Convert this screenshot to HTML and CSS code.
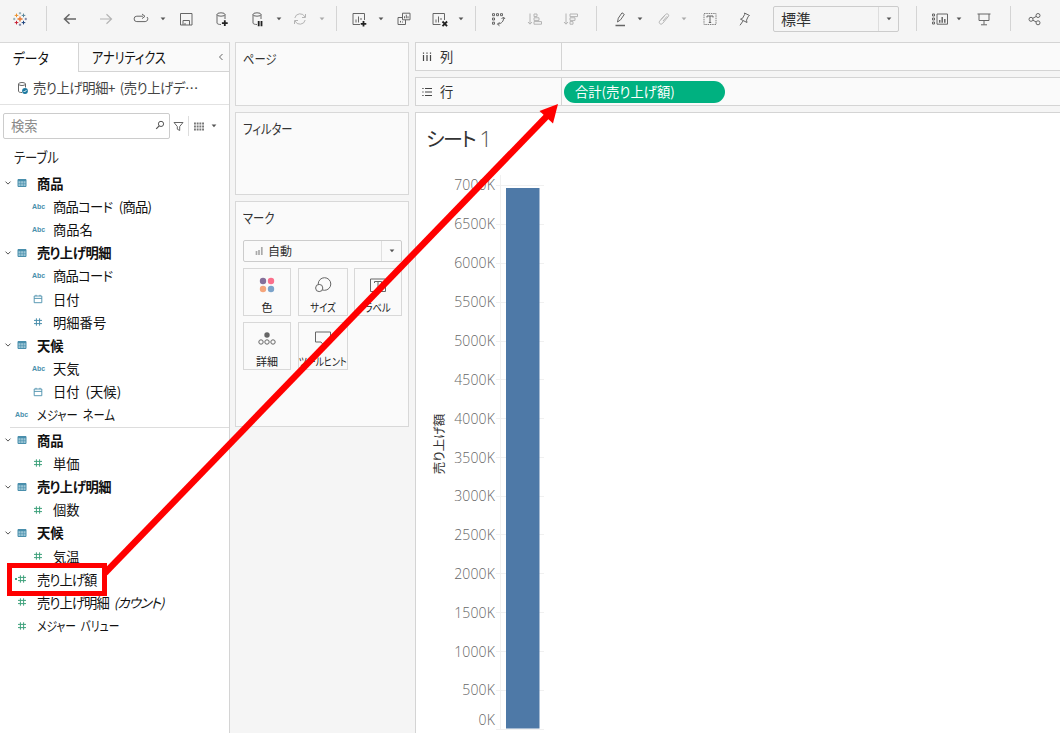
FILE: index.html
```
<!DOCTYPE html>
<html lang="ja">
<head>
  <meta charset="UTF-8" />
  <title>シート 1</title>
  <link rel="stylesheet" href="styles.css">
</head>
<body>
  <svg width="0" height="0" class="defs">
    <symbol id="caret" viewBox="0 0 6 4"><path d="M.6 .5h4.8L3 3.3z" fill="currentColor" stroke="none"/></symbol>
    <symbol id="table" viewBox="0 0 10 10"><path d="M1 1.5h8v7H1z" fill="#9cc6d6" stroke="#4a8fac"/><path d="M1 2.4h8" stroke="#4a8fac" stroke-width="1.6"/><path d="M3.7 3v5.5M6.4 3v5.5M1 5.7h8" stroke="#4a8fac" stroke-width=".6"/></symbol>
    <symbol id="hash" viewBox="0 0 10 10"><path d="M3.4 1.3v7.4M6.6 1.3v7.4M1 3.4h8M1 6.6h8" stroke="currentColor" stroke-width="1"/></symbol>
    <symbol id="date" viewBox="0 0 10 10"><path d="M1.2 2h7.6v6.7H1.2zM1.2 4.4h7.6M3 .8v1.4M7 .8v1.4" stroke="currentColor" stroke-width=".9"/></symbol>
    <symbol id="open" viewBox="0 0 8 6"><path d="M1.5 1.6L4 4.1l2.5-2.5" stroke="#555"/></symbol>
  </svg>

  <div class="toolbar">
    <svg class="icon logo" viewBox="0 0 18 18">
      <path d="M9 6.5v5M6.5 9h5" stroke="#e8762c" stroke-width="1.3"/>
      <path d="M5.5 3.6v3.6M3.7 5.4h3.6" stroke="#eb912c"/><path d="M12.5 3.6v3.6M10.7 5.4h3.6" stroke="#59879b"/>
      <path d="M5.5 10.8v3.6M3.7 12.6h3.6" stroke="#c72035"/><path d="M12.5 10.8v3.6M10.7 12.6h3.6" stroke="#1f457e"/>
      <path d="M9 2v2.4M7.8 3.2h2.4M3.2 7.8v2.4M2 9h2.4" stroke="#7199a6" stroke-width=".8"/>
      <path d="M9 13.6V16M7.8 14.8h2.4M14.8 7.8v2.4M13.6 9H16" stroke="#5b6591" stroke-width=".8"/>
    </svg>
    <i class="sep wide"></i>
    <svg class="icon" viewBox="0 0 18 18"><path d="M15 9H3.500M8.500 4.200L3.500 9l5 4.800" stroke-width="1.5"/></svg>
    <svg class="icon off" viewBox="0 0 18 18"><path d="M3 9h11.500M9.500 4.200l5 4.800-5 4.800" stroke-width="1.2"/></svg>
    <svg class="icon redo" viewBox="0 0 18 18"><path d="M11 6.200H4.800a2.700 2.700 0 0 0 0 5.400h8.400a2.700 2.700 0 0 0 1.800-4.600"/><path d="M10 4l3 2.300-3 2.300"/></svg>
    <svg class="caret"><use href="#caret"/></svg>
    <svg class="icon" viewBox="0 0 18 18"><path d="M3.500 3.500h11.500v11.500H3.500zM6 15v-4.500h6.500V15M8 15v-2"/></svg>
    <svg class="icon" viewBox="0 0 18 18"><path d="M8 14.500c-2 0-4-.5-4-1.500V4.500M12 4.500V9"/><ellipse cx="8" cy="4.500" rx="4" ry="1.700"/><path d="M11.800 10.300v5.800M8.900 13.200h5.800" class="strong"/></svg>
    <svg class="icon" viewBox="0 0 18 18"><path d="M8 14.500c-2 0-4-.5-4-1.500V4.500M12 4.500V9"/><ellipse cx="8" cy="4.500" rx="4" ry="1.700"/><path d="M9.700 11v5.200M12.500 11v5.200" class="strong"/></svg>
    <svg class="caret pause-caret"><use href="#caret"/></svg>
    <svg class="icon off refresh" viewBox="0 0 18 18"><path d="M3.800 8A5.400 5.400 0 0 1 14 7M14.200 10A5.400 5.400 0 0 1 4 11"/><path d="M14.500 4v3.500H11M3.500 14v-3.500H7"/></svg>
    <svg class="caret off"><use href="#caret"/></svg>
    <i class="sep near"></i>
    <svg class="icon add" viewBox="0 0 18 18"><path d="M10 14.500H3v-11h11.500V10M6 12.500V9.500M8.500 12.500V6.500M11 10V8"/><path d="M13.500 11v5.600M10.700 13.800h5.600" class="strong"/></svg>
    <svg class="caret"><use href="#caret"/></svg>
    <svg class="icon" viewBox="0 0 18 18"><path d="M7.500 3.200H15v6.600H7.500zM7.500 7.500H3V14.500h7.500V9.800M9.500 8.300v-2M11.300 8.300v-3.600M13 8.300v-2M5.500 12.500v-1.600M7.500 12.500v-1"/></svg>
    <svg class="icon" viewBox="0 0 18 18"><path d="M9.500 14.500H2v-11h11.500V10M5 12.500V9.500M7.500 12.500V6.500M10 10V8"/><path d="M11.500 11.500l4.600 4.600M16.100 11.500l-4.600 4.600" class="strong"/></svg>
    <svg class="caret clear-caret"><use href="#caret"/></svg>
    <i class="sep near"></i>
    <svg class="icon" viewBox="0 0 18 18"><path d="M2.500 3.700h2v2h-2zM6.500 3.700h2v2h-2zM10.500 3.700h2v2h-2zM2.500 8h2v2h-2zM2.500 12.200h2v2h-2z"/><path d="M13.500 7.500c.5 3.500-2 6.300-6 6.700M11.500 9l2-2 1.500 2M9.500 12.200l-2 2 2 1.600"/></svg>
    <svg class="icon off" viewBox="0 0 18 18"><path d="M4 3.500v10.500M2 12l2 2.200L6 12M8 4h3v2.600H8zM8 7.800h5v2.600H8zM8 11.600h7.500v2.600H8z"/></svg>
    <svg class="icon off" viewBox="0 0 18 18"><path d="M4 3.500v10.500M2 12l2 2.200L6 12M8 4h7.500v2.600H8zM8 7.800h5v2.600H8zM8 11.600h3v2.600H8z"/></svg>
    <i class="sep"></i>
    <svg class="icon" viewBox="0 0 18 18"><path d="M6.500 12l.8-3.800 3.700-5.400 2.300 1.600-3.700 5.400z"/><path d="M4.500 15.500h9.500" stroke-width="1.500"/></svg>
    <svg class="caret close"><use href="#caret"/></svg>
    <svg class="icon off clip" viewBox="0 0 18 18"><path d="M6 9.500l4.500-5c1.500-1.600 4.300 0 2.700 2.200l-5.700 6.800c-1.600 1.600-4.300-.2-2.900-2.300L9.700 5.500M8 11l4-4.700"/></svg>
    <svg class="caret off close"><use href="#caret"/></svg>
    <svg class="icon label" viewBox="0 0 18 18"><path d="M3 3.500h12v11H3z" stroke-dasharray="1.500 .8" stroke-width=".8"/><path d="M6 7.500V6h6v1.500M9 6v6.500M7.800 12.500h2.400"/></svg>
    <svg class="icon pin" viewBox="0 0 18 18"><path d="M9.500 3l5 2.500-1.300 1-1.700 3.700.5 2.300-6.500-3.300 2-.9 2.200-3.900zM8 11l-3 4.300"/></svg>
    <div class="fit"><span>標準</span><b><svg class="caret"><use href="#caret"/></svg></b></div>
    <i class="sep wide"></i>
    <svg class="icon" viewBox="0 0 18 18"><path d="M1.500 4h2v2h-2zM1.500 8h2v2h-2zM1.500 12h2v2h-2zM6 4h10.500v10.200H6z"/><path d="M8.700 12.700V10M11.200 12.700V7M13.800 12.700V9" stroke-width="1.500"/></svg>
    <svg class="caret cards-caret"><use href="#caret"/></svg>
    <svg class="icon present" viewBox="0 0 18 18"><path d="M2.500 4h13M4 4v6.500h10V4M9 10.500v4M6 14.800h6"/></svg>
    <i class="sep wide"></i>
    <svg class="icon share" viewBox="0 0 18 18"><circle cx="5" cy="9.300" r="2"/><circle cx="12" cy="5.500" r="2"/><circle cx="12" cy="12.800" r="2"/><path d="M6.800 8.300l3.500-1.900M6.800 10.200l3.500 1.800"/></svg>
  </div>

  <div class="workspace">
    <div class="data-pane">
      <div class="tabs">
        <div class="tab active"><span class="kana">データ</span></div>
        <div class="tab"><span class="kana narrow">アナリティクス</span><svg class="collapse" viewBox="0 0 6 8"><path d="M4.500 1L1.500 4l3 3" stroke="#666"/></svg></div>
      </div>
      <div class="source">
        <svg viewBox="0 0 13 14"><path d="M6 11.500c-2 0-3.500-.4-3.500-1.300V3M9.500 3v3.500" stroke="#666"/><ellipse cx="6" cy="3" rx="3.500" ry="1.500" stroke="#666"/><circle cx="9" cy="10" r="2.900" fill="#1c79a0"/><path d="M7.600 10l1 1 1.900-2" stroke="#fff" stroke-width=".9"/></svg>
        <span>売り上げ明細+ (売り上げデ⋯</span>
      </div>
      <div class="search-row">
        <div class="search">検索<svg viewBox="0 0 10 10"><circle cx="6" cy="3.900" r="2.600" stroke="#555"/><path d="M4.200 5.900L1.200 8.900" stroke="#555" stroke-width="1.200"/></svg></div>
        <svg class="funnel" viewBox="0 0 11 11"><path d="M1 1.500h9L6.700 5.500v4L4.300 8.200V5.500z" stroke="#666"/></svg>
        <i class="rule"></i>
        <svg class="grid-view" viewBox="0 0 10 9"><path d="M0 1.500h10M0 4.500h10M0 7.500h10" stroke="#777" stroke-width="1.800" stroke-dasharray="1.900 .8"/></svg>
        <svg class="caret"><use href="#caret"/></svg>
      </div>
      <div class="heading"><span class="kana">テーブル</span></div>

      <div class="tree">
        <div class="row folder"><svg class="open"><use href="#open"/></svg><svg class="type"><use href="#table"/></svg><span>商品</span></div>
        <div class="row child"><em>Abc</em><span class="mixed code">商品コード (商品)</span></div>
        <div class="row child"><em>Abc</em><span>商品名</span></div>
        <div class="row folder"><svg class="open"><use href="#open"/></svg><svg class="type"><use href="#table"/></svg><span class="mixed">売り上げ明細</span></div>
        <div class="row child"><em>Abc</em><span class="mixed code">商品コード</span></div>
        <div class="row child"><svg class="type"><use href="#date"/></svg><span>日付</span></div>
        <div class="row child"><svg class="type"><use href="#hash"/></svg><span>明細番号</span></div>
        <div class="row folder"><svg class="open"><use href="#open"/></svg><svg class="type"><use href="#table"/></svg><span>天候</span></div>
        <div class="row child"><em>Abc</em><span>天気</span></div>
        <div class="row child"><svg class="type"><use href="#date"/></svg><span>日付 (天候)</span></div>
        <div class="row"><em>Abc</em><span class="kana">メジャー ネーム</span></div>
      </div>
      <div class="tree measures">
        <div class="row folder"><svg class="open"><use href="#open"/></svg><svg class="type"><use href="#table"/></svg><span>商品</span></div>
        <div class="row child"><svg class="type"><use href="#hash"/></svg><span>単価</span></div>
        <div class="row folder"><svg class="open"><use href="#open"/></svg><svg class="type"><use href="#table"/></svg><span class="mixed">売り上げ明細</span></div>
        <div class="row child"><svg class="type"><use href="#hash"/></svg><span>個数</span></div>
        <div class="row folder"><svg class="open"><use href="#open"/></svg><svg class="type"><use href="#table"/></svg><span>天候</span></div>
        <div class="row child"><svg class="type"><use href="#hash"/></svg><span>気温</span></div>
        <div class="row calc"><svg class="type"><use href="#hash"/></svg><span class="mixed amount">売り上げ額</span></div>
        <div class="row"><svg class="type"><use href="#hash"/></svg><span class="mixed amount">売り上げ明細 <q>(カウント)</q></span></div>
        <div class="row"><svg class="type"><use href="#hash"/></svg><span class="kana narrow">メジャー バリュー</span></div>
      </div>
    </div>

    <div class="cards">
      <div class="card pages"><span class="kana">ページ</span></div>
      <div class="card filters"><span class="kana">フィルター</span></div>
      <div class="card marks"><span class="kana">マーク</span>
        <div class="mark-type">
          <svg class="bars" viewBox="0 0 9 9"><path d="M1.500 8V4M4 8V3M6.800 8V0" stroke="#aaa" stroke-width="1.700"/></svg>
          <span>自動</span><b><svg class="caret"><use href="#caret"/></svg></b>
        </div>
        <div class="mark-grid">
          <div class="mark"><svg viewBox="0 0 20 20"><circle cx="6" cy="6" r="3.200" fill="#85709a"/><circle cx="14" cy="6" r="3.200" fill="#fb6f8b"/><circle cx="6" cy="14" r="3.200" fill="#f5a57b"/><circle cx="14" cy="14" r="3.200" fill="#7ba3ca"/></svg>色</div>
          <div class="mark"><svg viewBox="0 0 20 20"><circle cx="11.500" cy="9" r="6.300" stroke="#666"/><circle cx="6.200" cy="13" r="3.600" stroke="#666" fill="#fafafa"/></svg><span class="kana mid">サイズ</span></div>
          <div class="mark"><svg viewBox="0 0 20 20"><path d="M2.500 4h15v12.500h-15z" stroke="#666"/><path d="M6.500 8V6.500h7V8M10 6.500V13M8.700 13h2.600" stroke="#666"/></svg><span class="kana mid">ラベル</span></div>
          <div class="mark"><svg viewBox="0 0 20 20"><circle cx="10" cy="6" r="2.700" fill="#666"/><circle cx="4" cy="13" r="2.200" stroke="#666"/><circle cx="10" cy="13" r="2.200" stroke="#666"/><circle cx="16" cy="13" r="2.200" stroke="#666"/></svg>詳細</div>
          <div class="mark"><svg viewBox="0 0 20 20"><path d="M2.500 3h15v10H13l-2.500 3L8 13H2.500z" stroke="#666"/></svg><span class="kana mid narrow">ツールヒント</span></div>
        </div>
      </div>
    </div>

    <div class="sheet">
      <div class="shelf">
        <div class="shelf-name"><svg viewBox="0 0 10 10"><path d="M1.500 3v6M5 3v6M8.500 3v6M1.500 .5v1.300M5 .5v1.300M8.500 .5v1.300" stroke="#444" stroke-width="1.200"/></svg>列</div>
      </div>
      <div class="shelf">
        <div class="shelf-name"><svg viewBox="0 0 10 10"><path d="M3 1.500h7M3 5h7M3 8.500h7M.3 1.500h1.300M.3 5h1.300M.3 8.500h1.300" stroke="#444" stroke-width="1.200"/></svg>行</div>
        <div class="pill">合計(売り上げ額)</div>
      </div>
      <div class="view">
        <h1><span class="name">シート</span> <span class="number">1</span></h1>
        <svg class="chart" viewBox="416 163 644 570">
          <g class="grid">
            <path d="M500.500 175V729M496 185.500h48M496 224.500h48M496 263.500h48M496 302.500h48M496 341.500h48M496 379.500h48M496 418.500h48M496 457.500h48M496 496.500h48M496 534.500h48M496 573.500h48M496 612.500h48M496 651.500h48M496 690.500h48M496 729.500h48"/>
          </g>
          <rect x="506" y="188" width="33.500" height="540.500" fill="#4e79a7"/>
          <g class="ticks">
            <text x="495" y="190">7000K</text>
            <text x="495" y="229">6500K</text>
            <text x="495" y="268">6000K</text>
            <text x="495" y="307">5500K</text>
            <text x="495" y="346">5000K</text>
            <text x="495" y="385">4500K</text>
            <text x="495" y="424">4000K</text>
            <text x="495" y="463">3500K</text>
            <text x="495" y="501">3000K</text>
            <text x="495" y="540">2500K</text>
            <text x="495" y="579">2000K</text>
            <text x="495" y="618">1500K</text>
            <text x="495" y="657">1000K</text>
            <text x="495" y="695">500K</text>
            <text x="495" y="725">0K</text>
          </g>
          <text class="axis-title" transform="translate(444 444) rotate(-90)">売り上げ額</text>
        </svg>
      </div>
    </div>
  </div>

  <!-- drag hint: measure field to the rows shelf -->
  <svg class="callout" viewBox="0 0 1060 733">
    <rect x="9.500" y="565.500" width="95" height="28" stroke="#f00" stroke-width="5"/>
    <path d="M105 573L547 116" stroke="#f00" stroke-width="6.500"/>
    <path d="M558 104l-5 19.500L539.500 111z" fill="#f00"/>
  </svg>
</body>
</html>
```

FILE: styles.css
```
* { box-sizing: border-box; }
body {
  margin: 0;
  width: 1060px;
  height: 733px;
  overflow: hidden;
  background: #f5f5f5;
  color: #333;
  font-family: "Noto Sans CJK JP", sans-serif;
  font-size: 13.3px;
  font-feature-settings: "palt";
}
svg { fill: none; flex: none; display: block; }
.defs { position: absolute; }
.caret { width: 6px; height: 4px; color: #555; }
.caret.off { color: #aaa; }

/* condensed kana, as in the UI font */
.kana { display: inline-block; transform: scaleX(.85); transform-origin: 0 50%; }
.kana.narrow { transform: scaleX(.81); }
.kana.mid { transform-origin: 50% 50%; }

/* toolbar */
.toolbar { display: flex; align-items: center; height: 42px; padding: 0 0 5px 11px; }
.icon { width: 18px; height: 18px; margin-left: 18px; stroke: #666; }
.icon.logo { margin-left: 0; }
.icon.off { stroke: #b4b4b4; }
.icon.redo { margin-left: 17px; }
.icon .strong { stroke: #222; stroke-width: 1.8; }
.sep { width: 1px; height: 25px; margin-left: 16px; background: #d4d4d4; }
.sep.near { margin-left: 11px; }
.sep.wide { margin-left: 17px; }
.sep + .icon { margin-left: 14px; }
.sep + .icon.add { margin-left: 13px; }
.toolbar > .caret { margin-left: 10px; }
.toolbar > .caret.close { margin-left: 8px; }
.toolbar > .caret.pause-caret { margin-left: 9px; }
.toolbar > .caret.clear-caret { margin-left: 9px; }
.toolbar > .caret.cards-caret { margin-left: 7px; }
.caret + .icon { margin-left: 11px; }
.caret + .icon.refresh { margin-left: 9px; }
.caret + .icon.clip { margin-left: 12px; }
.caret + .icon.label { margin-left: 14px; }
.caret + .icon.present { margin-left: 13px; }
.sep + .icon.share { margin-left: 15px; }
.icon.pin { margin-left: 16px; }
.fit {
  display: flex;
  align-items: center;
  width: 126px;
  height: 26px;
  margin: 1px 0 0 20px;
  border: 1px solid #ccc;
  border-radius: 2px;
  font-size: 15px;
  line-height: 22px;
}
.fit span { flex: 1; padding-left: 7px; }
.fit b { display: flex; align-items: center; justify-content: center; width: 20px; height: 100%; border-left: 1px solid #ddd; }

.workspace { display: flex; height: 691px; }

/* data pane */
.data-pane { width: 230px; background: #fff; border-right: 1px solid #d4d4d4; border-top: 1px solid #d8d8d8; }
.tabs { display: flex; height: 29px; font-size: 15px; line-height: 28px; color: #111; }
.tab { display: flex; align-items: center; flex: 1; padding-left: 13px; background: #fafafa; border-left: 1px solid #d4d4d4; border-bottom: 1px solid #d4d4d4; }
.tab.active { flex: none; width: 78px; background: #fff; border: 0; }
.collapse { width: 6px; height: 8px; margin: 0 5px 0 auto; }
.source { display: flex; align-items: center; gap: 4px; height: 33px; padding: 0 0 1px 16px; border-bottom: 1px solid #e2e2e2; color: #444; letter-spacing: -.4px; word-spacing: 2px; white-space: nowrap; }
.source svg { width: 13px; height: 14px; }
.search-row { display: flex; align-items: center; margin: 8px 0 0 3px; }
.search { display: flex; align-items: center; justify-content: space-between; width: 167px; height: 26px; padding: 0 4px 2px 7px; border: 1px solid #ccc; border-radius: 2px; color: #888; }
.search svg { width: 10px; height: 10px; }
.funnel { width: 11px; height: 11px; margin-left: 3px; }
.rule { width: 1px; height: 20px; margin-left: 4px; background: #ddd; }
.grid-view { width: 10px; height: 9px; margin-left: 5px; }
.search-row .caret { margin-left: 7px; }
.heading { height: 32.500px; padding: 3px 0 0 14px; font-size: 14.5px; line-height: 30px; color: #222; }
.tree { color: #111; word-spacing: 3px; }
.row { display: flex; align-items: center; height: 23.200px; padding-left: 15px; white-space: nowrap; }
.row.child { padding-left: 31px; }
.row.folder { padding-left: 4px; font-weight: 700; }
.mixed { letter-spacing: -.5px; }
.mixed.code { letter-spacing: -.7px; word-spacing: 4px; }
.mixed.amount { letter-spacing: -.95px; }
.open { width: 8px; height: 6px; margin-right: 5px; }
.type { width: 10px; height: 10px; margin: 0 10px 0 2px; color: #4a8fac; }
.folder .type { margin-left: 0; }
.row em { width: 22px; font: bold 7px "Liberation Sans", sans-serif; color: #4a8fac; }
.child em { text-indent: 1px; }
.measures { margin-left: 10px; border-top: 1px solid #ddd; padding-top: 1px; }
.measures .row { margin-left: -10px; }
.measures .child .type, .measures .row:not(.folder) .type { color: #3fa27c; }
.calc::before { content: ""; width: 2px; height: 2px; margin-right: -2px; background: #3fa27c; }
.row q { quotes: none; font-style: italic; }
.row q::before, .row q::after { content: none; }

/* cards */
.cards { display: flex; flex-direction: column; gap: 6px; width: 174px; margin-left: 5px; }
.card { padding: 6px 7px 0; border: 1px solid #d8d8d8; background: #fafafa; line-height: 20px; color: #333; }
.card > .kana { display: block; width: 100px; }
.pages { height: 64px; }
.filters { height: 83px; }
.marks { height: 226px; }
.mark-type { display: flex; align-items: center; width: 159px; height: 22px; margin-top: 12px; padding-left: 11px; border: 1px solid #ccc; border-radius: 2px; }
.mark-type span { flex: 1; padding-left: 4px; font-size: 12px; }
.mark-type b { display: flex; align-items: center; justify-content: center; width: 20px; height: 100%; border-left: 1px solid #e0e0e0; }
.bars { width: 9px; height: 9px; }
.mark-grid { display: grid; grid-template-columns: 48px 50px 48px; column-gap: 6.500px; row-gap: 6px; grid-auto-rows: 48px; margin-top: 6px; }
.mark { display: flex; flex-direction: column; align-items: center; padding-top: 6px; border: 1px solid #d8d8d8; font-size: 11px; line-height: 25px; white-space: nowrap; color: #222; }
.mark svg { width: 20px; height: 20px; }

/* sheet */
.sheet { flex: 1; display: flex; flex-direction: column; gap: 6px; margin-left: 6px; }
.shelf { display: flex; align-items: center; height: 29.500px; border: 1px solid #d4d4d4; border-right: 0; background: #fafafa; }
.shelf-name { display: flex; align-items: center; gap: 8px; width: 146px; height: 100%; padding-left: 6px; border-right: 1px solid #d4d4d4; }
.shelf-name svg { width: 10px; height: 10px; }
.pill { width: 161px; height: 22px; margin-left: 2px; padding-left: 11px; border-radius: 11px; background: #00b180; color: #fff; line-height: 22px; }
.view { flex: 1; border: solid #d4d4d4; border-width: 1px 0 0 1px; background: #fff; }
h1 { height: 50px; margin: 0; padding: 8px 0 0 10px; font-size: 20px; font-weight: 400; line-height: 34px; color: #333; }
.name { letter-spacing: -1.500px; }
.number { font-family: "Open Sans", sans-serif; font-weight: 300; font-size: 22px; color: #555; }
.chart { width: 644px; height: 570px; }
.grid { stroke: #f0f0f0; }
.ticks { fill: #666; font: 300 14px "Open Sans", sans-serif; letter-spacing: .15px; text-anchor: end; }
.axis-title { fill: #333; text-anchor: middle; font-size: 12.500px; }

.callout { position: absolute; left: 0; top: 0; width: 1060px; height: 733px; pointer-events: none; }
```
